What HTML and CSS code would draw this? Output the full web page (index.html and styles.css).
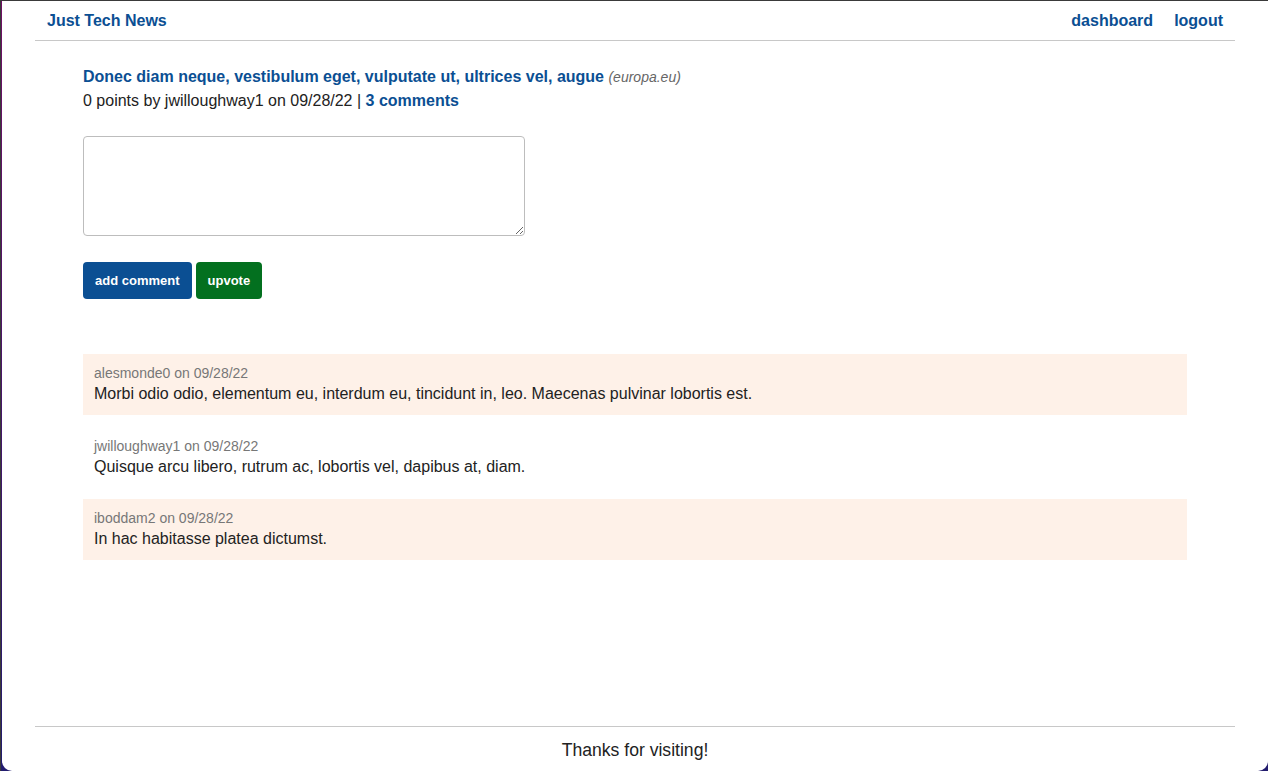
FILE: index.html
```html
<!DOCTYPE html>
<html lang="en">
<head>
<meta charset="utf-8">
<title>Just Tech News</title>
<link rel="stylesheet" href="styles.css">
</head>
<body>
<div class="window">
  <header class="site-header">
    <a class="brand" href="#">Just Tech News</a>
    <nav class="nav">
      <a href="#">dashboard</a>
      <a href="#">logout</a>
    </nav>
  </header>
  <main class="main">
    <article class="post">
      <div class="post-title"><a href="#">Donec diam neque, vestibulum eget, vulputate ut, ultrices vel, augue</a> <span class="domain">(europa.eu)</span></div>
      <div class="post-meta">0 points by jwilloughway1 on 09/28/22 | <a href="#">3 comments</a></div>
    </article>
    <form class="comment-form">
      <textarea class="comment-input"></textarea>
      <div class="actions">
        <button type="button" class="btn btn-blue">add comment</button>
        <button type="button" class="btn btn-green">upvote</button>
      </div>
    </form>
    <section class="comments">
      <div class="comment">
        <div class="comment-meta">alesmonde0 on 09/28/22</div>
        <div class="comment-text">Morbi odio odio, elementum eu, interdum eu, tincidunt in, leo. Maecenas pulvinar lobortis est.</div>
      </div>
      <div class="comment">
        <div class="comment-meta">jwilloughway1 on 09/28/22</div>
        <div class="comment-text">Quisque arcu libero, rutrum ac, lobortis vel, dapibus at, diam.</div>
      </div>
      <div class="comment">
        <div class="comment-meta">iboddam2 on 09/28/22</div>
        <div class="comment-text">In hac habitasse platea dictumst.</div>
      </div>
    </section>
  </main>
  <footer class="site-footer">Thanks for visiting!</footer>
</div>
</body>
</html>
```

FILE: styles.css
```css
* { box-sizing: border-box; }
html, body { height: 100%; }
body {
  margin: 0;
  background: linear-gradient(to bottom, #701064, #221c6e);
  border-top: 1px solid #3a3a3a;
  border-left: 1px solid #3a3a3a;
  font-family: "Liberation Sans", Arial, Helvetica, sans-serif;
  color: #222;
}
a { color: #0b4f93; font-weight: bold; text-decoration: none; }
.window {
  margin-left: 1px;
  background: #fff;
  border-radius: 0 0 10px 10px;
  min-height: calc(100vh - 1px);
  display: flex;
  flex-direction: column;
  align-items: center;
}
.site-header {
  width: 1200px;
  height: 40px;
  border-bottom: 1px solid #c8c8c8;
  display: flex;
  justify-content: space-between;
  align-items: center;
  padding: 0 12px;
  font-size: 16px;
}
.nav { display: flex; gap: 21px; }
.main {
  width: 1200px;
  flex: 1;
  padding: 24px 48px 0;
}
.post { font-size: 16px; line-height: 24px; }
.domain { font-style: italic; font-size: 14px; color: #666; }
.comment-form { margin-top: 23px; }
.comment-input {
  display: block;
  width: 442px;
  height: 100px;
  border: 1px solid #bdbdbd;
  border-radius: 4px;
  resize: both;
  font: inherit;
}
.actions { display: flex; gap: 4px; margin-top: 26px; }
.btn {
  height: 37px;
  padding: 0 12px;
  border: none;
  border-radius: 4px;
  color: #fff;
  font-family: inherit;
  font-weight: bold;
  font-size: 13px;
}
.btn-blue { background: #0b4f93; }
.btn-green { background: #03701f; }
.comments { margin-top: 55px; display: flex; flex-direction: column; gap: 12px; }
.comment { padding: 9px 11px 0; height: 60.5px; }
.comment:nth-child(odd) { background: #fef1e8; }
.comment-meta { font-size: 14px; line-height: 20px; color: #777; }
.comment-text { font-size: 16px; line-height: 22px; }
.site-footer {
  width: 1200px;
  border-top: 1px solid #c8c8c8;
  text-align: center;
  font-size: 17.6px;
  line-height: 22px;
  padding: 12px 0 10px;
  color: #222;
}
```
